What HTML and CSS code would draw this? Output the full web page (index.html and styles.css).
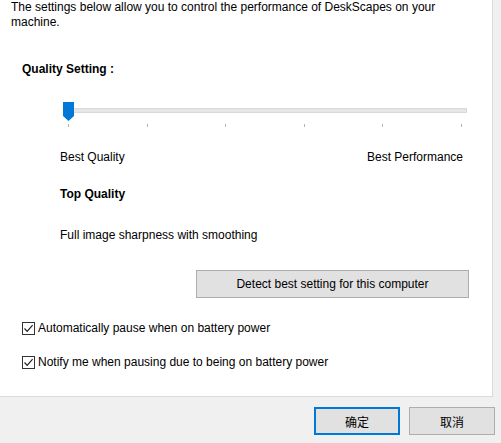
FILE: index.html
```html
<!DOCTYPE html>
<html>
<head>
<meta charset="utf-8">
<link rel="stylesheet" href="styles.css">
</head>
<body>
<div class="panel">
  <p class="intro">The settings below allow you to control the performance of DeskScapes on your machine.</p>
  <div class="heading">Quality Setting :</div>
  <div class="slider">
    <div class="track"></div>
    <svg class="thumb" width="11" height="19" viewBox="0 0 11 19"><path d="M0 0H11V14L5.5 19L0 14Z" fill="#0078d7"/></svg>
    <div class="ticks">
      <span></span><span></span><span></span><span></span><span></span><span></span>
    </div>
  </div>
  <div class="ends"><span>Best Quality</span><span>Best Performance</span></div>
  <div class="level">Top Quality</div>
  <div class="desc">Full image sharpness with smoothing</div>
  <div class="detect-row"><button class="detect">Detect best setting for this computer</button></div>
  <label class="check first"><span class="box"><svg width="11" height="11" viewBox="0 0 11 11"><path d="M1.5 5.5L4.2 8.3L9.6 2.2" fill="none" stroke="#222" stroke-width="1.2"/></svg></span>Automatically pause when on battery power</label>
  <label class="check second"><span class="box"><svg width="11" height="11" viewBox="0 0 11 11"><path d="M1.5 5.5L4.2 8.3L9.6 2.2" fill="none" stroke="#222" stroke-width="1.2"/></svg></span>Notify me when pausing due to being on battery power</label>
</div>
<div class="footer">
  <button class="btn primary">确定</button>
  <button class="btn">取消</button>
</div>
</body>
</html>
```
FILE: styles.css
```css
html, body {
  margin: 0;
  padding: 0;
}
body {
  background: #f0f0f0;
  font-family: "Liberation Sans", "Noto Sans CJK SC", sans-serif;
  font-size: 12px;
  color: #000;
  width: 501px;
  height: 443px;
  overflow: hidden;
}
.panel {
  background: #fff;
  width: 493px;
  height: 397px;
  box-sizing: border-box;
  border-right: 1px solid #dadada;
  border-bottom: 1px solid #dadada;
  overflow: hidden;
}
.intro {
  margin: 0 0 0 11px;
  padding-top: 0;
  width: 440px;
  line-height: 15px;
}
.heading {
  font-weight: bold;
  margin: 32px 0 0 22px;
  line-height: 15px;
}
.slider {
  position: relative;
  margin: 25px 0 0 63px;
  width: 404px;
  height: 30px;
}
.track {
  position: absolute;
  left: 0;
  right: 0;
  top: 6px;
  height: 3px;
  background: #e6e6e6;
  border: 1px solid #d9d9d9;
  border-left: none;
  box-sizing: content-box;
}
.thumb {
  position: absolute;
  left: 0;
  top: 0;
  display: block;
}
.ticks {
  position: absolute;
  left: 5px;
  top: 22px;
  width: 394px;
  display: flex;
  justify-content: space-between;
}
.ticks span {
  width: 1px;
  height: 3px;
  background: #b4b4b4;
}
.ends {
  display: flex;
  justify-content: space-between;
  margin: 18px 0 0 60px;
  width: 403px;
  line-height: 15px;
}
.level {
  font-weight: bold;
  margin: 22px 0 0 60px;
  line-height: 15px;
}
.desc {
  margin: 26px 0 0 60px;
  line-height: 15px;
}
.detect-row {
  margin: 27px 0 0 196px;
}
.detect {
  display: block;
  width: 273px;
  height: 28px;
  background: #e1e1e1;
  border: 1px solid #adadad;
  font-family: inherit;
  font-size: 12px;
  color: #000;
  padding: 0;
}
.check {
  display: flex;
  align-items: center;
  margin-left: 22px;
  height: 15px;
  line-height: 15px;
}
.check.first {
  margin-top: 23px;
}
.check.second {
  margin-top: 19px;
}
.box {
  width: 13px;
  height: 13px;
  box-sizing: border-box;
  border: 1px solid #333;
  background: #fff;
  margin-right: 3px;
  display: flex;
  align-items: center;
  justify-content: center;
}
.box svg {
  display: block;
}
.footer {
  display: flex;
  gap: 9px;
  padding: 10px 0 0 314px;
}
.btn {
  width: 86px;
  height: 28px;
  background: #e1e1e1;
  border: 1px solid #adadad;
  font-family: "Noto Sans CJK SC", sans-serif;
  font-size: 12px;
  color: #000;
  padding: 0;
}
.btn.primary {
  border: 2px solid #0078d7;
}
```
